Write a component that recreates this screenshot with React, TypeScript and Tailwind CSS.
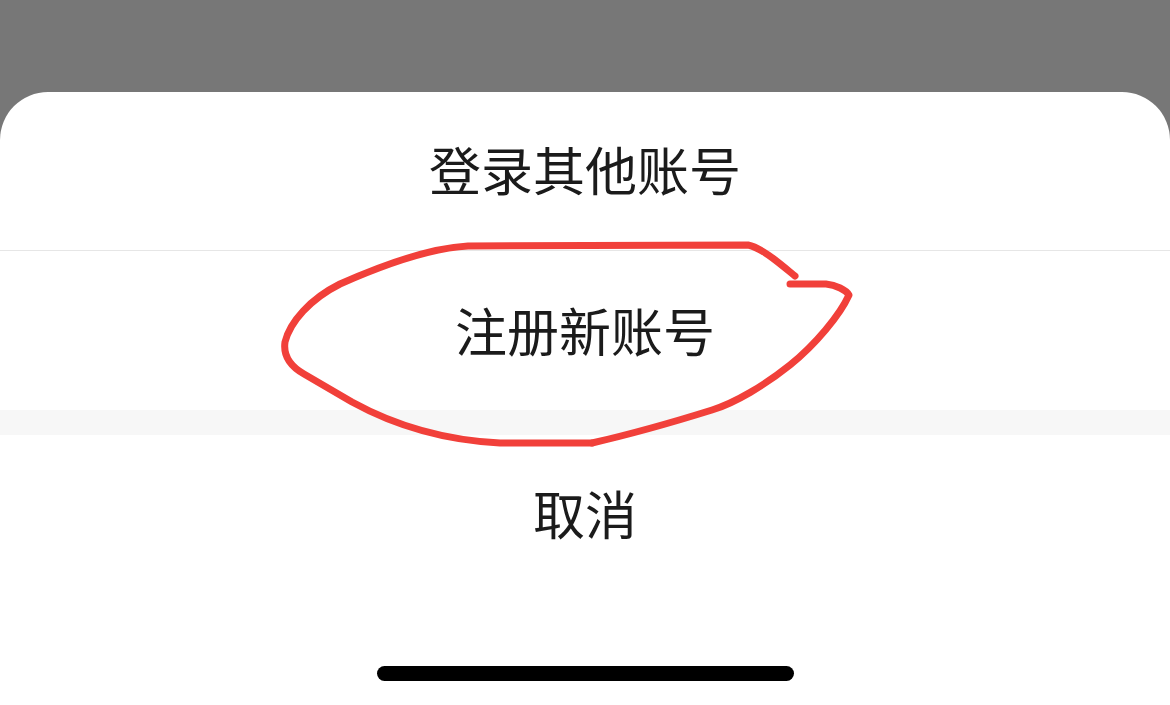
const font = {
  fontFamily: '"Noto Sans CJK SC", "Noto Sans", sans-serif',
};

function SheetItem({ label, className = "" }: { label: string; className?: string }) {
  return (
    <button
      type="button"
      className={`flex w-full items-center justify-center text-[52px] leading-none text-[#1b1b1b] ${className}`}
    >
      {label}
    </button>
  );
}

function Scribble() {
  // hand-drawn red loop around the second option
  return (
    <svg
      className="pointer-events-none absolute inset-0"
      width="1170"
      height="705"
      viewBox="0 0 1170 705"
      fill="none"
      stroke="#f1403a"
      strokeWidth="7"
      strokeLinecap="round"
      strokeLinejoin="round"
    >
      <path d="M795 276 C778 262 762 248 748 245 L468 246 C430 248 385 264 340 284 C310 299 290 322 285 342 C283 356 290 366 304 374 L352 402 C392 424 440 440 500 443 L592 443" />
      <path d="M790 284 L826 284 C836 285 846 290 849 295 C840 315 815 345 790 365 C765 385 735 403 712 410 C680 420 640 432 592 443" />
    </svg>
  );
}

export default function App() {
  return (
    <div className="relative flex h-[705px] w-[1170px] flex-col overflow-hidden bg-[#777777]" style={font}>
      <div className="h-[92px] shrink-0" />
      <div className="flex flex-1 flex-col rounded-t-[48px] bg-white">
        <SheetItem label="登录其他账号" className="h-[159px] border-b border-[#e6e6e6] pb-[5px]" />
        <SheetItem label="注册新账号" className="h-[159px] pb-[2px]" />
        <div className="h-[25px] bg-[#f7f7f7]" />
        <SheetItem label="取消" className="h-[160px] pb-[4px]" />
        <div className="flex flex-1 justify-center pt-[71px]">
          <div className="h-[15px] w-[417px] rounded-full bg-black" />
        </div>
      </div>
      <Scribble />
    </div>
  );
}
